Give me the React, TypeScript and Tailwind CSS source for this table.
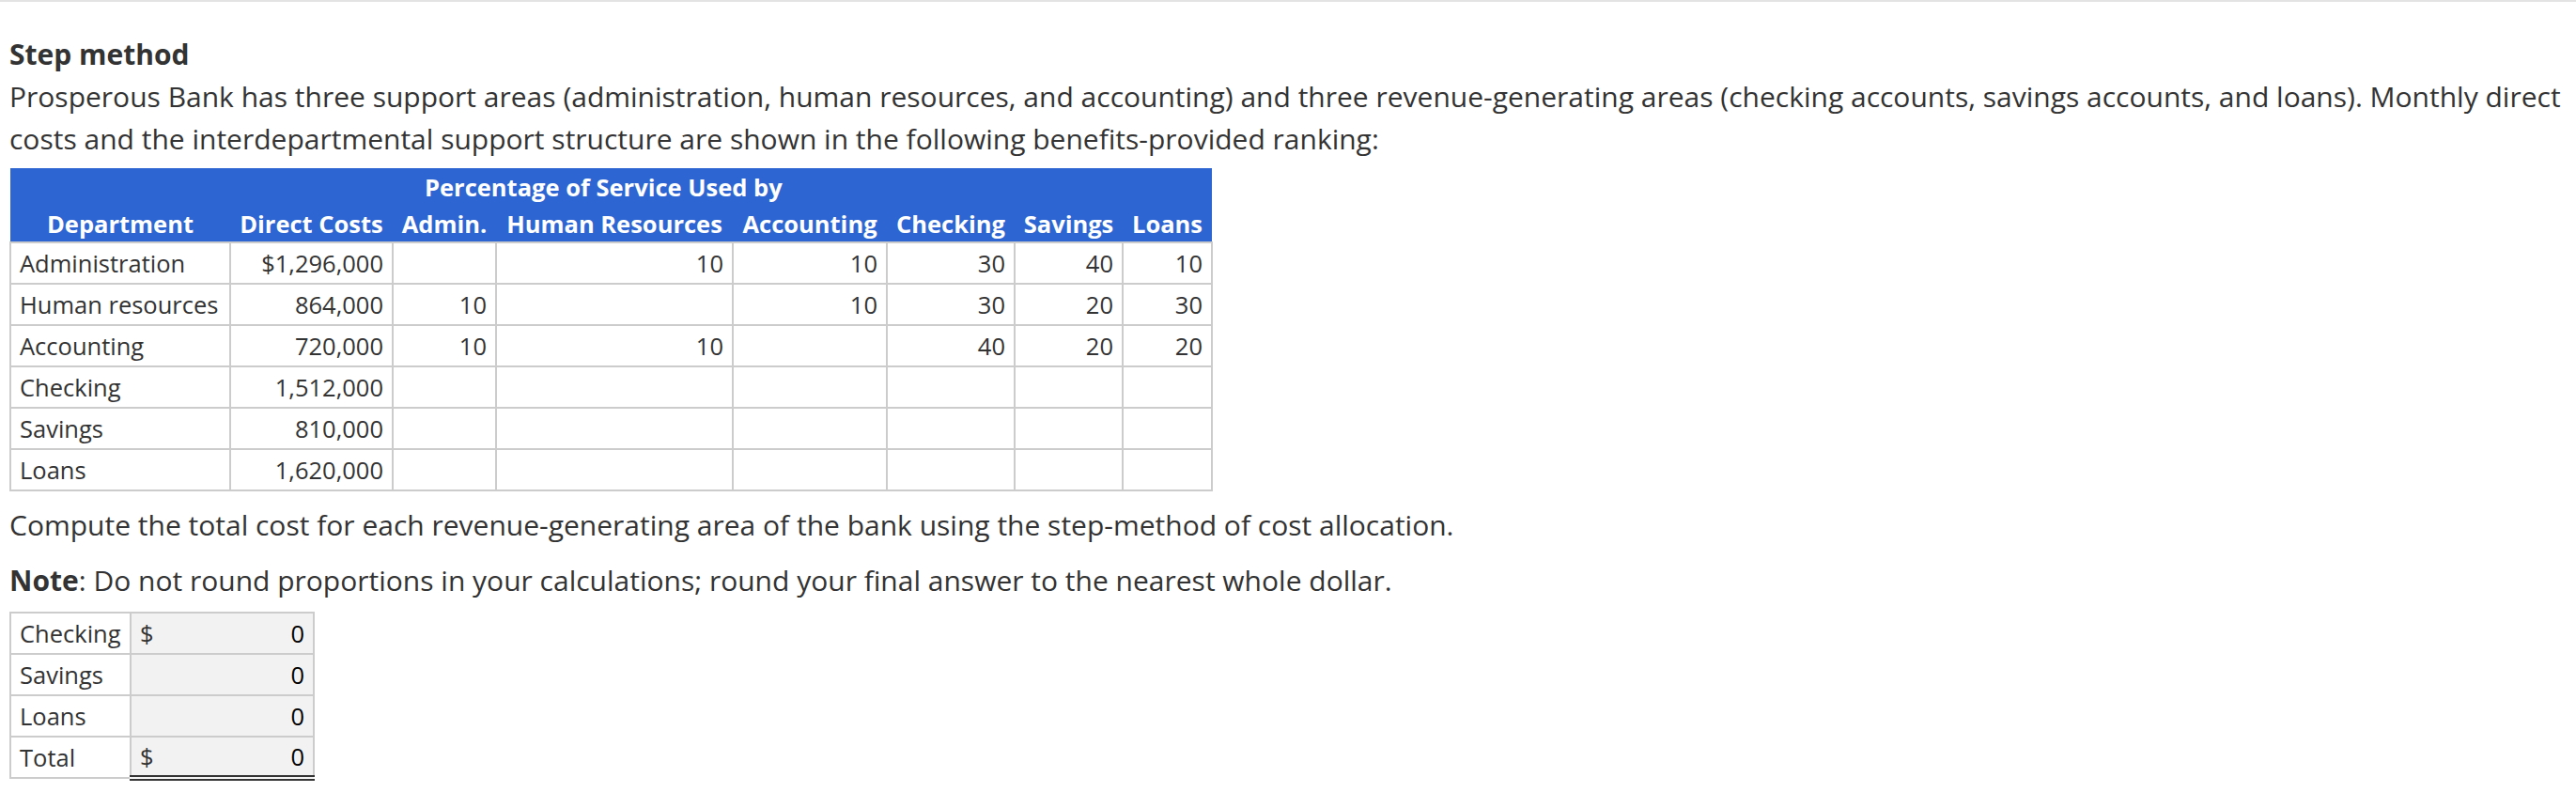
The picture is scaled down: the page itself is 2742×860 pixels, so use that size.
import React from 'react'

const columns = ['Department', 'Direct Costs', 'Admin.', 'Human Resources', 'Accounting', 'Checking', 'Savings', 'Loans']
const widths = ['w-[234px]', 'w-[173px]', 'w-[110px]', 'w-[252px]', 'w-[164px]', 'w-[136px]', 'w-[115px]', 'w-[95px]']

const rows: string[][] = [
  ['Administration', '$1,296,000', '', '10', '10', '30', '40', '10'],
  ['Human resources', '864,000', '10', '', '10', '30', '20', '30'],
  ['Accounting', '720,000', '10', '10', '', '40', '20', '20'],
  ['Checking', '1,512,000', '', '', '', '', '', ''],
  ['Savings', '810,000', '', '', '', '', '', ''],
  ['Loans', '1,620,000', '', '', '', '', '', ''],
]

const answers = [
  { label: 'Checking', sign: '$', value: '0' },
  { label: 'Savings', sign: '', value: '0' },
  { label: 'Loans', sign: '', value: '0' },
]

export default function App() {
  return (
    <div className="min-h-screen bg-white text-[#333] font-['Open_Sans',sans-serif]">
      <div className="h-[2px] bg-[#e3e3e3]" />

      <div className="px-[10px] pt-[33px]">
        <h2 className="text-[30px] leading-[45px] font-bold">Step method</h2>
        <p className="text-[30px] leading-[45px]">
          Prosperous Bank has three support areas (administration, human resources, and accounting) and three
          revenue-generating areas (checking accounts, savings accounts, and loans). Monthly direct costs and the
          interdepartmental support structure are shown in the following benefits-provided ranking:
        </p>

        {/* cost table */}
        <table className="mt-[9px] w-[1279px] table-fixed border-collapse text-[25.5px]">
          <colgroup>
            {widths.map((w, i) => (
              <col key={i} className={w} />
            ))}
          </colgroup>
          <thead>
            <tr className="bg-[#2d65d2] text-white font-bold">
              <th className="h-[40px] p-0" colSpan={2} />
              <th colSpan={6} className="h-[40px] pl-[34px] text-left leading-[40px] whitespace-nowrap">
                Percentage of Service Used by
              </th>
            </tr>
            <tr className="bg-[#2d65d2] text-white font-bold">
              {columns.map((c) => (
                <th key={c} className="h-[38px] px-0 text-center leading-[38px] whitespace-nowrap">
                  {c}
                </th>
              ))}
            </tr>
          </thead>
          <tbody>
            {rows.map((r) => (
              <tr key={r[0]}>
                {r.map((cell, i) => (
                  <td
                    key={i}
                    className={`h-[44px] border-2 border-[#ccc] px-[9px] py-0 leading-[40px] whitespace-nowrap ${
                      i === 0 ? 'text-left' : 'text-right'
                    }`}
                  >
                    {cell}
                  </td>
                ))}
              </tr>
            ))}
          </tbody>
        </table>

        <p className="mt-[13px] text-[30px] leading-[45px]">
          Compute the total cost for each revenue-generating area of the bank using the step-method of cost allocation.
        </p>
        <p className="mt-[14px] text-[30px] leading-[45px]">
          <span className="font-bold">Note</span>: Do not round proportions in your calculations; round your final
          answer to the nearest whole dollar.
        </p>

        {/* answer table */}
        <table className="mt-[11px] w-[323px] table-fixed border-collapse text-[25.5px]">
          <colgroup>
            <col className="w-[128px]" />
            <col className="w-[195px]" />
          </colgroup>
          <tbody>
            {answers.map((a, i) => (
              <tr key={a.label}>
                <td className="h-[44px] border-2 border-[#ccc] px-[9px] py-0 leading-[40px] whitespace-nowrap">
                  {a.label}
                </td>
                <td
                  className={`h-[44px] border-2 border-[#ccc] bg-[#f2f2f2] px-[9px] py-0 leading-[40px] ${
                    i === answers.length - 1 ? 'border-b-black' : ''
                  }`}
                >
                  <div className="flex justify-between text-black">
                    <span className="text-[#333]">{a.sign}</span>
                    <span>{a.value}</span>
                  </div>
                </td>
              </tr>
            ))}
            <tr>
              <td className="h-[44px] border-2 border-[#ccc] px-[9px] py-0 leading-[40px]">Total</td>
              <td className="h-[44px] border-2 border-[#ccc] border-b-[6px] border-b-[#333] border-double bg-[#f2f2f2] px-[9px] py-0 leading-[40px]">
                <div className="flex justify-between text-black">
                  <span className="text-[#333]">$</span>
                  <span>0</span>
                </div>
              </td>
            </tr>
          </tbody>
        </table>
      </div>
    </div>
  )
}
